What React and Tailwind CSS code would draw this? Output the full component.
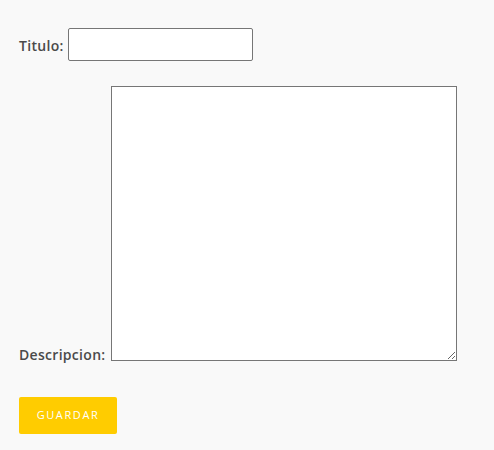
export default function App() {
  return (
    <div className="min-h-[450px] w-full bg-[#f9f9f9] pl-[19px] pt-[28px]" style={{ fontFamily: "'Open Sans', 'Noto Sans', sans-serif" }}>
      <div className="flex items-center gap-[4px]">
        <label className="mt-[1px] text-[14px] font-semibold tracking-[0.3px] text-[#4a4a4a]">Titulo:</label>
        <input type="text" className="h-[33px] w-[185px] rounded-[2px] border border-[#767676] bg-white outline-none" />
      </div>
      <div className="mt-[25px] flex items-end gap-[5px]">
        <label className="mb-[-3px] text-[14px] font-semibold leading-[18px] tracking-[0.3px] text-[#4a4a4a]">Descripcion:</label>
        <textarea className="h-[275px] w-[346px] resize border border-[#767676] bg-white outline-none" />
      </div>
      <button className="mt-[36px] flex h-[37px] w-[98px] items-center justify-center rounded-[2px] bg-[#ffcc00] text-[11px] tracking-[1.6px] text-white">
        GUARDAR
      </button>
    </div>
  );
}
